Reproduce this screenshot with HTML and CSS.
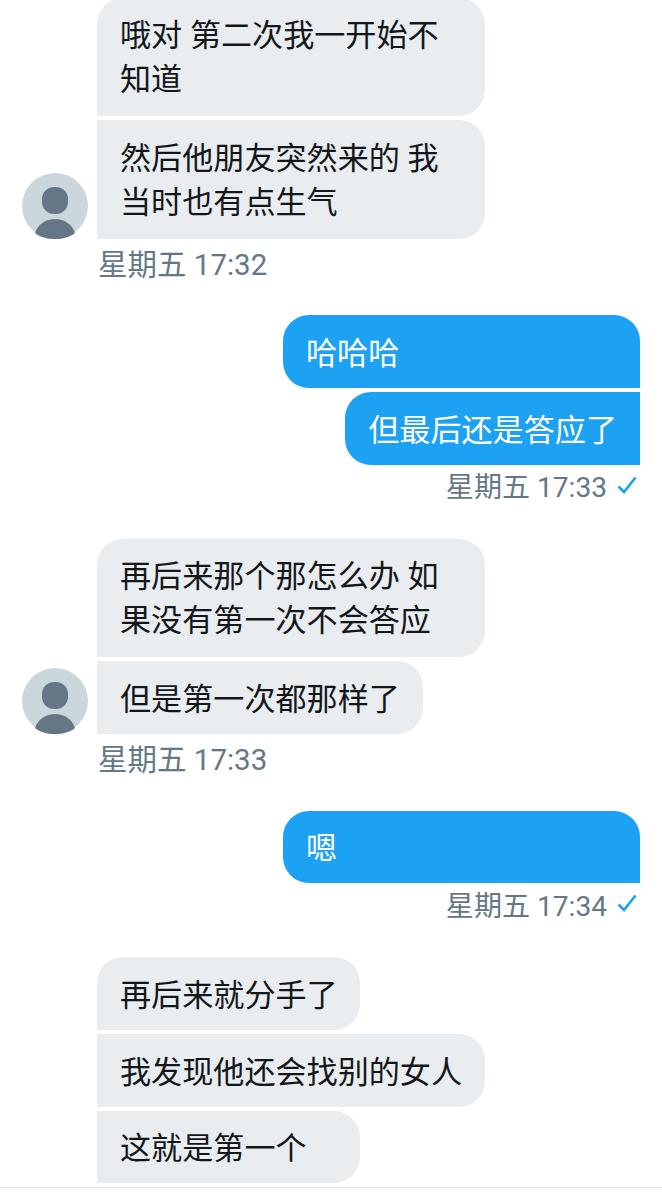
FILE: index.html
```html
<!DOCTYPE html>
<html lang="zh">
<head>
    <meta charset="UTF-8">
    <meta name="viewport" content="width=device-width, initial-scale=1.0">
    <title>Messages</title>
    <link rel="stylesheet" href="styles.css">
</head>
<body>
    <div class="chat">
        <div class="group group-in">
            <div class="row">
                <svg class="avatar" viewBox="0 0 66 66"><circle cx="33" cy="33" r="33" fill="#ccd6dd"/><rect x="20" y="14" width="26" height="27" rx="12" fill="#657786"/><path d="M13 60c3-9 11-14 20-14s17 5 20 14c-5 4-12 6-20 6s-15-2-20-6z" fill="#657786"/></svg>
                <div class="stack">
                    <div class="bubble two-line in top w-388">哦对 第二次我一开始不<br>知道</div>
                    <div class="bubble two-line in w-388">然后他朋友突然来的 我<br>当时也有点生气</div>
                </div>
            </div>
            <div class="time time-in">星期五 17:32</div>
        </div>

        <div class="group group-out">
            <div class="stack stack-out">
                <div class="bubble out top w-357">哈哈哈</div>
                <div class="bubble out">但最后还是答应了</div>
            </div>
            <div class="time time-out">星期五 17:33
                <svg class="check" viewBox="0 0 20 18"><path d="M1.5 10.5L7 16L18.5 1.5" fill="none" stroke="#1da1f2" stroke-width="2.6"/></svg>
            </div>
        </div>

        <div class="group group-in">
            <div class="row">
                <svg class="avatar" viewBox="0 0 66 66"><circle cx="33" cy="33" r="33" fill="#ccd6dd"/><rect x="20" y="14" width="26" height="27" rx="12" fill="#657786"/><path d="M13 60c3-9 11-14 20-14s17 5 20 14c-5 4-12 6-20 6s-15-2-20-6z" fill="#657786"/></svg>
                <div class="stack">
                    <div class="bubble two-line in top w-388">再后来那个那怎么办 如<br>果没有第一次不会答应</div>
                    <div class="bubble in">但是第一次都那样了</div>
                </div>
            </div>
            <div class="time time-in">星期五 17:33</div>
        </div>

        <div class="group group-out">
            <div class="stack stack-out">
                <div class="bubble out top w-357">嗯</div>
            </div>
            <div class="time time-out">星期五 17:34
                <svg class="check" viewBox="0 0 20 18"><path d="M1.5 10.5L7 16L18.5 1.5" fill="none" stroke="#1da1f2" stroke-width="2.6"/></svg>
            </div>
        </div>

        <div class="group">
            <div class="stack stack-offset">
                <div class="bubble in top w-263">再后来就分手了</div>
                <div class="bubble in">我发现他还会找别的女人</div>
                <div class="bubble in w-263">这就是第一个</div>
            </div>
        </div>
    </div>
    <div class="bottom-line"></div>
</body>
</html>
```

FILE: styles.css
```css
html, body {
    height: 1200px;
    overflow: hidden;
}
body {
    margin: 0;
    background-color: #fff;
    font-family: Roboto, "Noto Sans CJK SC", sans-serif;
}
.chat {
    padding: 0 22px;
    margin-top: -2.5px;
}
.group-in {
    margin-bottom: 30.5px;
}
.group-out {
    margin-bottom: 34px;
}
.row {
    display: flex;
    align-items: flex-end;
    gap: 9px;
}
.avatar {
    width: 66px;
    height: 66px;
    flex: none;
}
.stack {
    display: flex;
    flex-direction: column;
    align-items: flex-start;
    gap: 4px;
}
.stack-out {
    align-items: flex-end;
}
.stack-offset {
    margin-left: 75px;
}
.bubble {
    box-sizing: border-box;
    padding: 16.5px 23px 12.2px;
    font-size: 31.1px;
    line-height: 44px;
    white-space: nowrap;
}
.two-line {
    padding-bottom: 14.2px;
}
.in {
    background-color: #e9edf0;
    color: #14171a;
    border-radius: 0 26px 26px 0;
}
.in.top {
    border-top-left-radius: 26px;
}
.out {
    background-color: #1da1f2;
    color: #fff;
    border-radius: 26px 0 0 26px;
}
.out.top {
    border-top-right-radius: 26px;
}
.w-388 {
    width: 388px;
}
.w-357 {
    width: 357px;
}
.w-263 {
    width: 263px;
}
.time {
    display: flex;
    align-items: center;
    height: 46px;
    font-size: 29.5px;
    color: #657786;
}
.time-in {
    margin-left: 76px;
}
.time-out {
    height: 40px;
    font-size: 28.1px;
    justify-content: flex-end;
    gap: 10px;
}
.check {
    width: 20px;
    height: 18px;
    margin-right: 3px;
}
.bottom-line {
    position: absolute;
    left: 0;
    right: 0;
    top: 1187px;
    height: 1px;
    background-color: #ddd;
}
```
